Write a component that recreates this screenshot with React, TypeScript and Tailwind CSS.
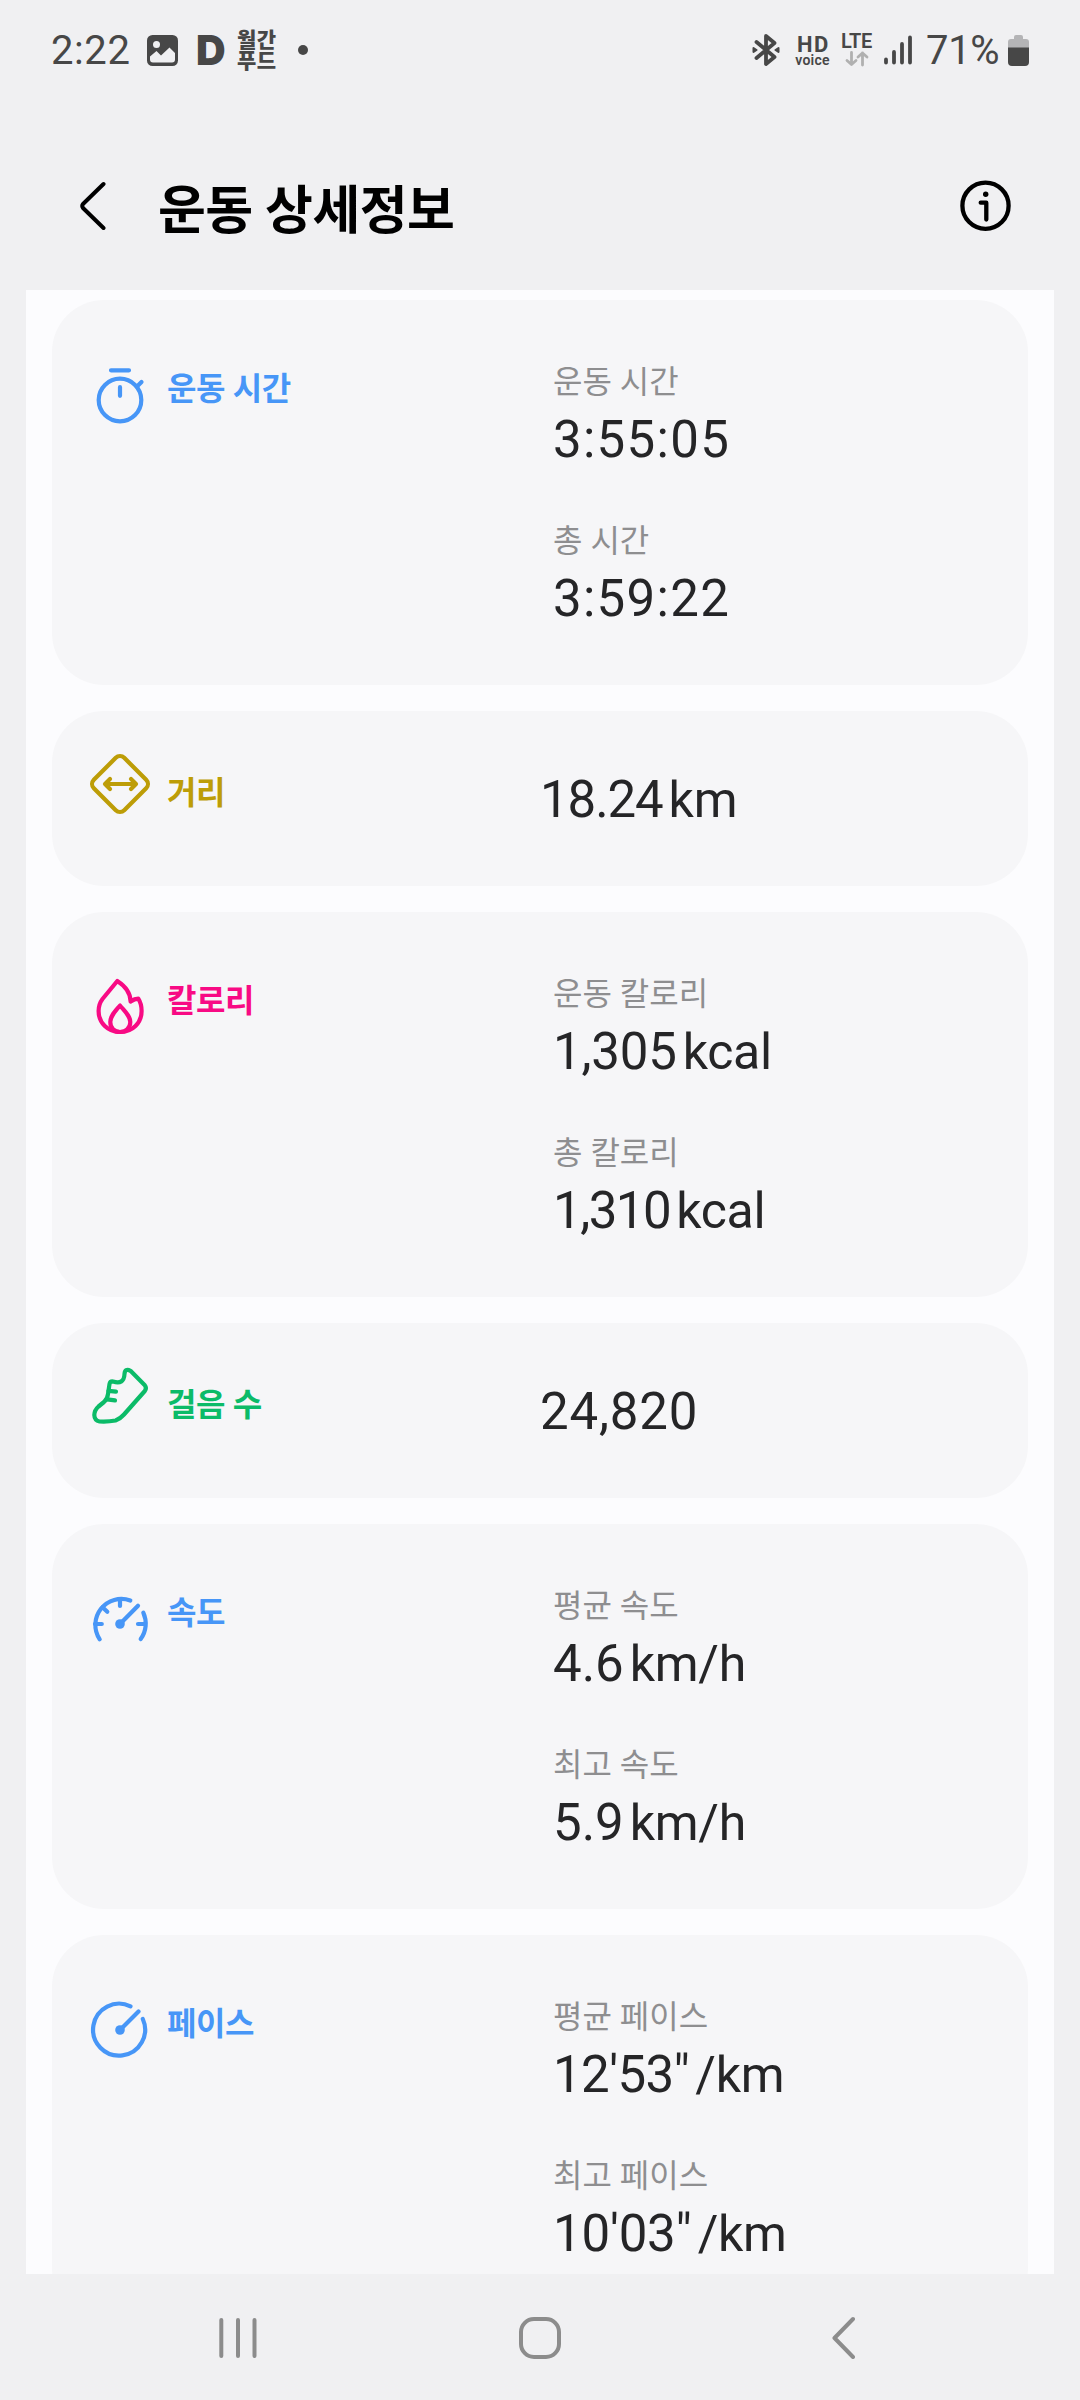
import type { ReactNode } from "react";

type Stat = { label?: string; value: string; unit?: string; spacing?: string };

type Metric = {
  title: string;
  color: string;
  icon: ReactNode;
  stats: Stat[];
};

const metrics: Metric[] = [
  {
    title: "운동 시간",
    color: "text-[#4796f7]",
    icon: (
      <>
        <circle cx="30" cy="34" r="21.3" />
        <path d="M21 4.3H39M30 21.2V29.8M47 20.5L51.5 16" />
      </>
    ),
    stats: [
      { label: "운동 시간", value: "3:55:05", spacing: "tracking-[1.3px]" },
      { label: "총 시간", value: "3:59:22", spacing: "tracking-[1.3px]" },
    ],
  },
  {
    title: "거리",
    color: "text-[#bd9d07]",
    icon: (
      <>
        <rect x="8.5" y="8.5" width="43" height="43" rx="6" transform="rotate(45 30 30)" />
        <path d="M16 30H45M20 25L15 30L20 35M41 25L46 30L41 35" />
      </>
    ),
    stats: [{ value: "18.24", unit: "km", spacing: "tracking-[-1.1px]" }],
  },
  {
    title: "칼로리",
    color: "text-[#f80a84]",
    icon: (
      <>
        <path d="M27.3 3C22 9.5 17 15.5 12.5 21C9.5 25 8.6 29 8.6 33C8.6 45 18 54 30 54C42.5 54 51.6 45 51.6 33C51.6 28 50.5 24 48.3 20.6C45.5 20.6 43 21.8 40.6 23.6C40.6 15 35 8 27.3 3Z" />
        <path d="M30 27.5C25 33.5 20.3 38 20.3 44C20.3 50 24.5 54 30 54C35.5 54 40.3 50 40.3 44C40.3 38 35 33.5 30 27.5Z" />
      </>
    ),
    stats: [
      { label: "운동 칼로리", value: "1,305", unit: "kcal", spacing: "tracking-[-0.2px]" },
      { label: "총 칼로리", value: "1,310", unit: "kcal", spacing: "tracking-[-1.5px]" },
    ],
  },
  {
    title: "걸음 수",
    color: "text-[#0bbb68]",
    icon: (
      <>
        <path d="M40.5 4.8L54.8 19.2Q57 22 54.8 25L34 48.5Q30 53 25.5 54.5Q18 56 9.5 55.5Q4.5 54.5 4.3 49Q4.5 44 8.5 40.5L14 36Q17.5 33 18 28L19.5 18Q20 15.2 23 15.5Q34 19 34.5 8Q35 2 40.5 4.8Z" />
        <path d="M18.5 24.9L26 25.6M17 33.4L25 34.4" />
      </>
    ),
    stats: [{ value: "24,820", spacing: "tracking-[0.8px]" }],
  },
  {
    title: "속도",
    color: "text-[#4796f7]",
    icon: (
      <>
        <path d="M9.7 49.3A26 26 0 0 1 40.3 10.5M53.3 22.7A26 26 0 0 1 50.7 49" />
        <path d="M30 10V16M5 34H11.8M48 34H55M12.5 17.2L17.3 21.8M30 34L48 15.7" />
        <circle cx="30" cy="34" r="4.8" fill="currentColor" stroke="none" />
      </>
    ),
    stats: [
      { label: "평균 속도", value: "4.6", unit: "km/h" },
      { label: "최고 속도", value: "5.9", unit: "km/h" },
    ],
  },
  {
    title: "페이스",
    color: "text-[#4796f7]",
    icon: (
      <>
        <path d="M52.8 18A26 26 0 1 1 40.5 5.3M30 29L48.5 10.5" />
        <circle cx="30" cy="29" r="4.8" fill="currentColor" stroke="none" />
      </>
    ),
    stats: [
      { label: "평균 페이스", value: "12'53\"", unit: "/km", spacing: "tracking-[-0.6px]" },
      { label: "최고 페이스", value: "10'03\"", unit: "/km", spacing: "tracking-[-0.2px]" },
    ],
  },
];

function StatusBar() {
  return (
    <div className="flex h-[100px] shrink-0 items-center justify-between pl-[51px] pr-[51px] text-[#474747]">
      <div className="flex items-center">
        <span className="w-[96px] pt-px text-[40px] leading-none tracking-[0.6px]">2:22</span>
        <svg className="size-[31px]" viewBox="0 0 31 31">
          <rect width="31" height="31" rx="5.5" fill="currentColor" />
          <circle cx="9.5" cy="9.5" r="3.5" fill="#f0f0f2" />
          <path d="M3 21.5L9.5 16L14 20.5L22.500 12.5L28 18V24.500Q28 27.500 25 27.500H6Q3 27.500 3 24.500Z" fill="#f0f0f2" />
        </svg>
        <span className="ml-[18px] w-[41px] pt-px font-[Inter] text-[41px] font-black leading-none">D</span>
        <span className="w-[42px] pt-[2px] text-[21px] font-black leading-[21px] tracking-[0.5px]">
          월간
          <br />
          푸드
        </span>
        <span className="ml-[19px] size-[10px] rounded-full bg-[#474747]" />
      </div>
      <div className="flex items-center">
        <svg className="h-[34px] w-[28px]" viewBox="0 0 28 34" fill="none" stroke="currentColor" strokeWidth="3.8" strokeLinecap="round" strokeLinejoin="round">
          <path d="M4.5 9L22.5 24L14 31V3L22.5 10L4.5 25" />
          <path d="M1.5 15L4.5 17L1.5 19ZM26.5 15L23.5 17L26.5 19Z" fill="currentColor" strokeWidth="2" />
        </svg>
        <div className="ml-[15px] flex w-[35px] flex-col items-center pt-[2px]">
          <span className="pl-[2px] text-[22px] font-bold leading-[18px] tracking-[1.5px]">HD</span>
          <span className="text-[14px] font-semibold leading-[13px] tracking-[0.2px]">voice</span>
        </div>
        <div className="ml-[10px] flex w-[33px] flex-col items-center gap-[2px]">
          <span className="text-[20px] font-semibold leading-[16px] tracking-[-0.3px]">LTE</span>
          <svg className="h-[16px] w-[24px]" viewBox="0 0 24 16" fill="none" stroke="#b0b0b0" strokeWidth="2.8" strokeLinecap="round" strokeLinejoin="round">
            <path d="M6.5 1.5V13.5M2 9.5L6.5 13.5L11 9.5M17.5 14V2M13 6L17.5 2L22 6" />
          </svg>
        </div>
        <svg className="ml-[11px] h-[30px] w-[28px]" viewBox="0 0 28 30" stroke="currentColor" strokeWidth="3.8" strokeLinecap="round">
          <path d="M2 24.5V27.5M10 17V27.5M18 9V27.5M26 2.5V27.5" />
        </svg>
        <span className="ml-[14px] w-[79px] whitespace-nowrap pt-px text-[40px] leading-none tracking-[-0.3px]">71%</span>
        <svg className="ml-[3px] h-[31px] w-[21px]" viewBox="0 0 21 31">
          <path d="M0 7Q0 4 3 4H6V2Q6 0 8 0H13Q15 0 15 2V4H18Q21 4 21 7V14H0Z" fill="#b4b4b6" />
          <path d="M0 12.5H21V27Q21 31 17 31H4Q0 31 0 27Z" fill="currentColor" />
        </svg>
      </div>
    </div>
  );
}

function Header() {
  return (
    <header className="flex h-[190px] shrink-0 items-start pl-[80px] pr-[69px] pt-[80px]">
      <svg className="mt-px h-[50px] w-[26px]" viewBox="0 0 26 50" fill="none" stroke="#000" strokeWidth="4" strokeLinecap="round" strokeLinejoin="round">
        <path d="M23.5 3L3 23Q1.5 25 3 27L23.5 47" />
      </svg>
      <h1 className="ml-[52px] flex-1 pt-[2px] text-[52px] font-bold leading-[60px] tracking-[-0.5px] text-black">
        운동 상세정보
      </h1>
      <svg className="size-[51px]" viewBox="0 0 51 51" fill="none" stroke="#000" strokeWidth="4.3" strokeLinecap="round" strokeLinejoin="round">
        <circle cx="25.5" cy="25.7" r="23.1" />
        <path d="M20.7 22.7H26.3V39.5" />
        <circle cx="25.7" cy="14.3" r="2.7" fill="#000" stroke="none" />
      </svg>
    </header>
  );
}

function StatBlock({ label, value, unit, spacing = "" }: Stat) {
  return (
    <div>
      {label && (
        <p className="mb-[6px] h-[40px] pl-px text-[32px] leading-[40px] text-[#8e8e90]">{label}</p>
      )}
      <p className="flex h-[63px] items-baseline whitespace-nowrap pl-px text-[51px] leading-[64px] text-[#252527]">
        <span className={spacing}>{value}</span>
        {unit && <span className="ml-[6px] text-[50px] tracking-[-0.3px]">{unit}</span>}
      </p>
    </div>
  );
}

function MetricCard({ title, color, icon, stats }: Metric) {
  const single = stats.length === 1;
  return (
    <section
      className={`flex shrink-0 items-start rounded-[52px] bg-[#f6f6f8] pl-[38px] ${single ? "h-[175px]" : "h-[385px]"}`}
    >
      <div className={`flex ${color} ${single ? "w-[449px] pt-[43px]" : "w-[462px] pt-[66px]"}`}>
        <svg className="size-[60px] overflow-visible" viewBox="0 0 60 60" fill="none" stroke="currentColor" strokeWidth="4.2" strokeLinecap="round" strokeLinejoin="round">
          {icon}
        </svg>
        <h2
          className={`ml-[17px] text-[32px] font-bold leading-[40px] tracking-[-0.4px] ${single ? "pt-[19px]" : "pt-[3px]"}`}
        >
          {title}
        </h2>
      </div>
      <div className={`flex flex-col gap-[50px] ${single ? "pt-[57px]" : "pt-[62px]"}`}>
        {stats.map((s) => (
          <StatBlock key={s.value} {...s} />
        ))}
      </div>
    </section>
  );
}

function NavigationBar() {
  return (
    <nav className="flex h-[126px] shrink-0 items-center pl-[219px]">
      <svg className="h-[44px] w-[38px]" viewBox="0 0 38 44" stroke="#8c8c8c" strokeWidth="4" strokeLinecap="round">
        <path d="M2.3 5V41M19 5V41M35.5 5V41" />
      </svg>
      <svg className="ml-[261px] h-[44px] w-[44px]" viewBox="0 0 44 44" fill="none" stroke="#8c8c8c" strokeWidth="4">
        <rect x="3" y="4" width="38" height="38" rx="13" />
      </svg>
      <svg className="ml-[269px] h-[44px] w-[24px]" viewBox="0 0 24 44" fill="none" stroke="#8c8c8c" strokeWidth="4" strokeLinecap="round" strokeLinejoin="round">
        <path d="M22 4L3.5 23L22 42" />
      </svg>
    </nav>
  );
}

function App() {
  return (
    <div
      lang="ko"
      className="flex h-[2400px] w-[1080px] flex-col overflow-hidden bg-[#f0f0f2] font-[Roboto,'Noto_Sans_CJK_KR',sans-serif]"
    >
      <StatusBar />
      <Header />
      <main className="mx-[26px] flex h-[1984px] shrink-0 flex-col gap-[26px] overflow-hidden bg-[#fcfcfe] px-[26px] pt-[10px]">
        {metrics.map((m) => (
          <MetricCard key={m.title} {...m} />
        ))}
      </main>
      <NavigationBar />
    </div>
  );
}

export default App;
